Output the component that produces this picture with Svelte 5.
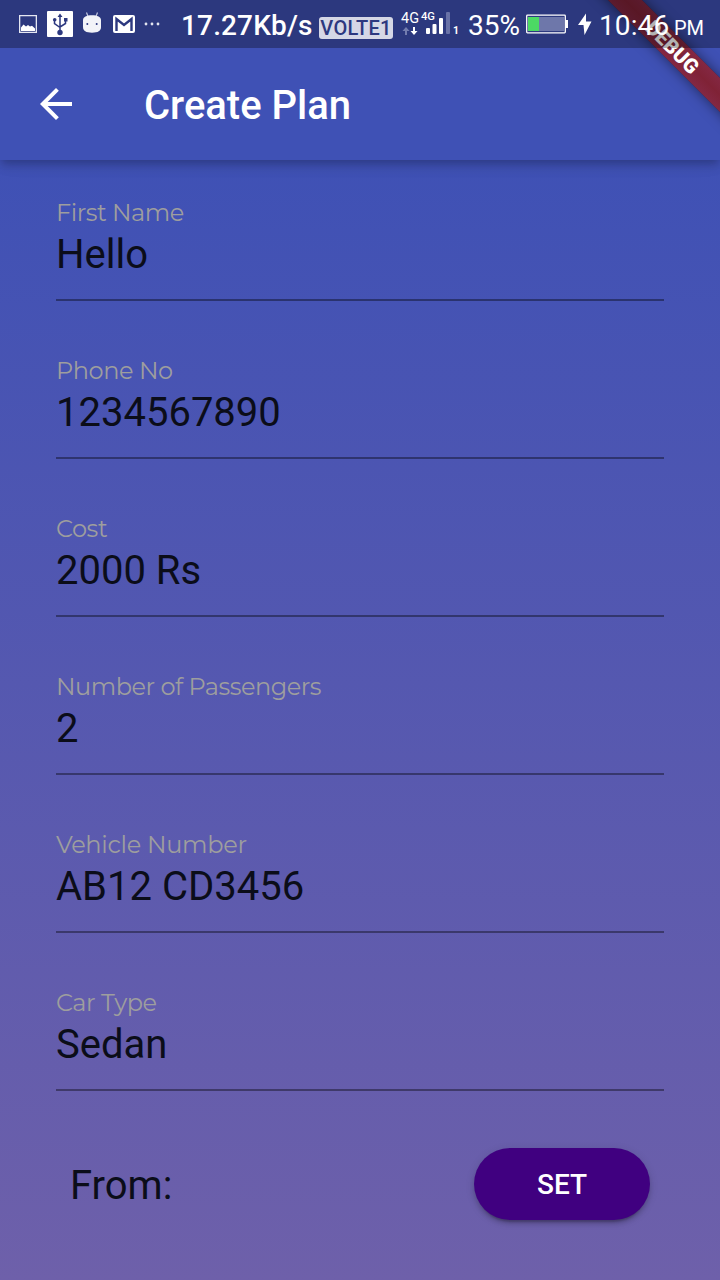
<script>
  const fields = [
    { label: 'First Name', value: 'Hello', spacing: -0.48 },
    { label: 'Phone No', value: '1234567890', spacing: -0.42 },
    { label: 'Cost', value: '2000 Rs', spacing: -0.45 },
    { label: 'Number of Passengers', value: '2', spacing: -0.48 },
    { label: 'Vehicle Number', value: 'AB12 CD3456', spacing: -0.28 },
    { label: 'Car Type', value: 'Sedan', spacing: -0.5 }
  ];
</script>

<div class="screen">
  <header class="appbar">
    <svg class="back" width="48" height="48" viewBox="0 0 24 24"><path fill="#fff" d="M20 11H7.83l5.59-5.59L12 4l-8 8 8 8 1.41-1.41L7.83 13H20v-2z" /></svg>
    <h1>Create Plan</h1>
  </header>

  <main>
    {#each fields as field}
      <div class="field">
        <div class="label" style="letter-spacing: {field.spacing}px">{field.label}</div>
        <div class="value">{field.value}</div>
      </div>
    {/each}
    <div class="from">
      <span>From:</span>
      <button>SET</button>
    </div>
  </main>

  <div class="banner">DEBUG</div>

  <div class="status">
    <svg class="notes" width="170" height="48" viewBox="0 0 170 48">
      <path fill="#e5e7f2" fill-rule="evenodd" d="M19 15h18v18H19zm1.3 1.3v15.4h15.4V16.3z" />
      <path fill="#fff" d="M21 31v-3.500l2.500-3 2.500 2 2-1.500 2 1.500 2-.7 3 2.700V31z" />
      <rect x="47" y="11" width="26" height="26" rx="1" fill="#fff" />
      <g fill="none" stroke="#2c387f" stroke-width="1.5">
        <path d="M60 32V15M54.500 20v3.500l5.500 4M65.500 20v3.500L60 27" />
      </g>
      <g fill="#2c387f"><circle cx="60" cy="32.500" r="2.700" /><path d="M57.500 17L60 13.500 62.500 17zM64 18h3.500v3.500H64z" /><circle cx="54.700" cy="19.700" r="1.800" /></g>
      <path stroke="#c3c7df" stroke-width="1.200" d="M86.500 12.500l1.500 4M97.500 12.500L96 16.500" />
      <path fill="#f2f3f8" d="M83 20c0-3 3.500-4.700 9-4.700s9 1.700 9 4.700v7c0 4-3 5.700-9 5.700s-9-1.700-9-5.700z" />
      <circle cx="87.300" cy="24" r="1" fill="#2c387f" /><circle cx="96.700" cy="24" r="1" fill="#2c387f" />
      <rect x="113" y="15" width="22" height="18" rx="2" fill="#fff" />
      <path d="M116.500 31V19l7.500 6 7.500-6v12" fill="none" stroke="#2c387f" stroke-width="2.400" />
      <g fill="#e3e5f0"><circle cx="146" cy="24" r="1.400" /><circle cx="152" cy="24" r="1.400" /><circle cx="158" cy="24" r="1.400" /></g>
    </svg>
    <span class="speed">17.27Kb/s</span>
    <span class="volte">VOLTE1</span>
    <svg class="signal" width="67" height="48" viewBox="0 0 67 48">
      <g font-family="Roboto, sans-serif" fill="#fff">
        <text x="8" y="23" font-size="14" textLength="18" lengthAdjust="spacingAndGlyphs">4G</text>
        <text x="28" y="20" font-size="11" font-weight="500" textLength="14" lengthAdjust="spacingAndGlyphs">4G</text>
        <text x="60" y="34" font-size="11.500" font-weight="700" textLength="6" lengthAdjust="spacingAndGlyphs">1</text>
      </g>
      <path fill="#747daf" d="M13 27l3.500 4H14v4h-2v-4H9.500z" />
      <path fill="#fff" d="M21 35l-3.500-4H20v-4h2v4h2.500z" />
      <path fill="#fff" d="M33 29q0-1 1-1h2q1 0 1 1v4q0 1-1 1h-2q-1 0-1-1zM39.500 25q0-1 1-1h2q1 0 1 1v8q0 1-1 1h-2q-1 0-1-1zM46 19q0-1 1-1h2q1 0 1 1v14q0 1-1 1h-2q-1 0-1-1z" />
      <rect x="53" y="12" width="4" height="22" rx="1" fill="#6972a7" />
    </svg>
    <span class="percent">35%</span>
    <svg class="battery" width="74" height="48" viewBox="0 0 74 48">
      <rect x="1.700" y="15.200" width="38.600" height="17.600" rx=".8" fill="none" stroke="#fff" stroke-width="1.300" />
      <path fill="#6e77aa" d="M3 17h36v14H3z" /><path fill="#4cd964" d="M3 17h11v14H3z" /><path fill="#fff" d="M40 20h3v8h-3z" />
      <path fill="#fff" d="M61 13.500L53 25h5.500L59.500 35l7-13.500H61z" />
    </svg>
    <span class="time">10:46</span><span class="pm">PM</span>
  </div>
</div>

<style>
  :global(body) { margin: 0; }
  .screen {
    position: relative;
    width: 720px;
    height: 1280px;
    overflow: hidden;
    font-family: Roboto, sans-serif;
    color: #0b0d19;
    background: linear-gradient(#3f51b5 160px, #6e60aa 1280px);
  }
  .appbar {
    position: relative;
    box-sizing: border-box;
    height: 160px;
    padding: 48px 0 0 32px;
    display: flex;
    align-items: center;
    gap: 64px;
    background: #3f51b5;
    box-shadow: 0 4px 8px -2px rgba(0, 0, 0, .2), 0 8px 10px rgba(0, 0, 0, .08), 0 2px 20px rgba(0, 0, 0, .06);
  }
  h1 { margin: 0; color: #fff; font-size: 40px; line-height: 48px; font-weight: 500; padding-top: 3px; }
  main { padding: 32px 56px 0; }
  .field { box-sizing: border-box; height: 109px; margin-bottom: 49px; border-bottom: 2px solid rgba(0, 0, 0, .38); }
  .label { height: 39px; line-height: 42px; font-family: Montserrat, Inter, sans-serif; font-weight: 450; font-size: 24px; color: #9e9e9e; white-space: nowrap; }
  .value { font-size: 40px; line-height: 48px; white-space: nowrap; }
  .from { display: flex; justify-content: space-between; align-items: center; padding: 8px 14px 0; height: 72px; font-size: 40px; }
  .from span { padding-top: 2px; }
  button {
    width: 176px;
    height: 72px;
    border: 0;
    border-radius: 36px;
    background: #400080;
    color: #fff;
    font: 500 28px Roboto, sans-serif;
    box-shadow: 0 6px 2px -4px rgba(0, 0, 0, .2), 0 4px 4px rgba(0, 0, 0, .14), 0 2px 10px rgba(0, 0, 0, .12);
  }
  .banner {
    position: absolute;
    left: 572px;
    top: 35px;
    width: 200px;
    height: 24px;
    transform: rotate(45deg);
    background:
      linear-gradient(rgba(183, 28, 28, .627), rgba(183, 28, 28, .627)),
      linear-gradient(rgba(0, 0, 0, .27), rgba(0, 0, 0, .46) 50%, rgba(0, 0, 0, .27));
    box-shadow: 0 0 13px rgba(0, 0, 0, .5);
    color: #fff;
    font-size: 20.400px;
    line-height: 25px;
    font-weight: 900;
    text-align: center;
    text-indent: 1px;
  }
  .status {
    position: absolute;
    inset: 0 0 auto;
    height: 48px;
    display: flex;
    background: rgba(0, 0, 0, .3);
    color: #fff;
    line-height: 51px;
    white-space: nowrap;
  }
  .status svg, .status span { flex: none; }
  .speed { box-sizing: border-box; width: 149px; padding-left: 11px; font-size: 28px; font-weight: 500; letter-spacing: .15px; }
  .volte { width: 74px; height: 22px; margin-top: 17px; border-radius: 3px; background: #d5d7e6; color: #2c387f; font-size: 20px; line-height: 23px; font-weight: 500; letter-spacing: .25px; text-align: center; }
  .percent { width: 57px; padding-left: 8px; font-size: 28px; }
  .time { width: 74px; font-size: 28px; letter-spacing: .1px; }
  .pm { font-size: 20px; line-height: 56px; padding-left: 1px; }
</style>
